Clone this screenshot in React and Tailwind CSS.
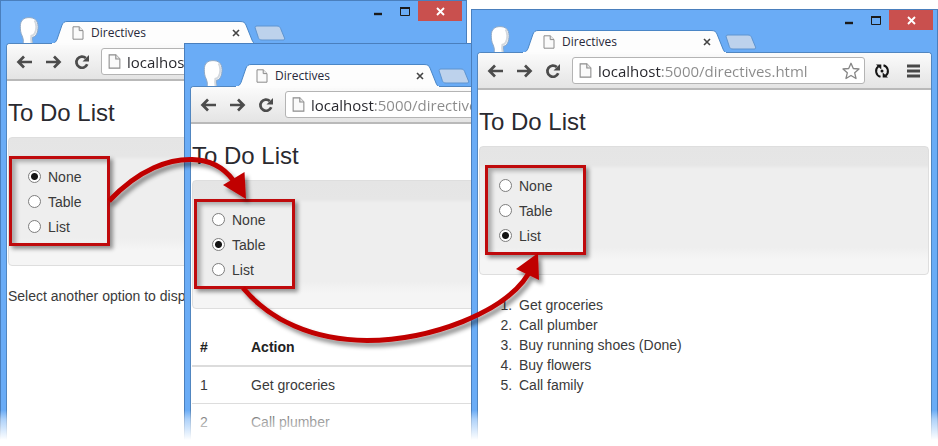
import React from "react";

function PageIcon({ className }) {
  return (
    <svg viewBox="0 0 12 14" className={className} aria-hidden="true">
      <path d="M1 .8h6.2L11 4.6v8.6H1z" fill="#fafafa" stroke="#8c8c8c" strokeWidth="1" />
      <path d="M7.2 .8v3.8H11" fill="#e8e8e8" stroke="#8c8c8c" strokeWidth="1" />
    </svg>
  );
}

function TitleBar() {
  return (
    <div className="relative h-[43px] shrink-0">
      <svg viewBox="0 0 22 28" className="absolute bottom-0 left-[17px] h-7 w-[22px]" aria-hidden="true">
        <path
          d="M5 28c.6-3 .4-5-.8-8C2.600 17 2.300 13.500 2.300 10.500 2.300 4.500 5.500 1.600 11 1.600s9 3 9 9c0 3-.4 5-1.300 7-.9 2.200-2.200 3.400-4.500 3.600-.4 2.500-.1 4.800.8 6.800z"
          fill="#ffffff"
          stroke="#8fa9c6"
          strokeWidth="1"
        />
        <path d="M16.500 4.500c2.300 3 2.300 9.500.2 13-.8 1.300-2 2-3.400 2.200-.4 2-.3 5 .2 7.500" fill="none" stroke="#d3d8de" strokeWidth="1.800" />
      </svg>
      <svg viewBox="0 0 460 24" className="absolute bottom-[-1px] left-0 h-6 w-[460px]" aria-hidden="true">
        <path
          d="M46 23.500c6 0 8-1 10-5L61 4c1.200-2.500 2.500-3.500 5-3.500h173c3.500 0 5 1 6 3.500l6 15c1.500 3.500 3 4.500 7 4.500z"
          fill="#fdfdfd"
          stroke="#4a86c6"
          strokeWidth="1"
        />
      </svg>
      <div className="absolute bottom-0 left-[71px] flex h-[22px] w-[170px] items-center">
        <PageIcon className="h-[14px] w-3" />
        <span className="ml-[7px] flex-1 font-['Open_Sans','Noto_Sans',sans-serif] text-[12px] leading-4 text-[#28283a]">Directives</span>
        <button type="button" aria-label="Close tab" className="h-3 w-3">
          <svg viewBox="0 0 12 12" className="h-3 w-3">
            <path d="M3 3l6 6M9 3l-6 6" stroke="#444" strokeWidth="1.600" />
          </svg>
        </button>
      </div>
      <button type="button" aria-label="New tab" className="absolute bottom-[3px] left-[253px] h-4 w-8">
        <svg viewBox="0 0 32 16" className="h-4 w-8">
          <path d="M3 1h20c2 0 3 1 3.600 2.500L30.500 13c.4 1.300 0 2-1.500 2H8c-2 0-3-.6-3.700-2.500L1.200 3C.8 1.800 1.500 1 3 1z" fill="#bdd2ec" stroke="#5e94d0" />
        </svg>
      </button>
      <div className="absolute right-1 top-0 flex h-5">
        <button type="button" aria-label="Minimize" className="w-[26px]">
          <svg viewBox="0 0 26 20" className="h-5 w-[26px]">
            <path d="M9 13h8" stroke="#1b1b1b" strokeWidth="2.400" />
          </svg>
        </button>
        <button type="button" aria-label="Maximize" className="w-[27px]">
          <svg viewBox="0 0 27 20" className="h-5 w-[27px]">
            <path d="M9.500 7h9v7.500h-9z" fill="none" stroke="#1b1b1b" />
            <path d="M9 7h10" stroke="#1b1b1b" strokeWidth="2" />
          </svg>
        </button>
        <button type="button" aria-label="Close" className="w-11 bg-[#c9504e]">
          <svg viewBox="0 0 44 20" className="h-5 w-11">
            <path d="M19 7l7 7M26 7l-7 7" stroke="#fff" strokeWidth="1.900" />
          </svg>
        </button>
      </div>
    </div>
  );
}

function Toolbar() {
  return (
    <div className="flex h-[37px] shrink-0 items-center rounded-t-[3px] border-b-2 border-[#b9b9b9] bg-linear-to-b from-[#fbfbfb] to-[#e4e4e4] pl-[9px] pr-[11px]">
      <button type="button" aria-label="Back" className="h-4 w-[18px]">
        <svg viewBox="0 0 18 16" className="h-4 w-[18px]">
          <path d="M16 8H3M8 2.500L2.500 8 8 13.500" fill="none" stroke="#4c4c4c" strokeWidth="2.700" />
        </svg>
      </button>
      <button type="button" aria-label="Forward" className="ml-[11px] h-4 w-[18px]">
        <svg viewBox="0 0 18 16" className="h-4 w-[18px]">
          <path d="M1 8h13M9 2.500L14.500 8 9 13.500" fill="none" stroke="#4c4c4c" strokeWidth="2.700" />
        </svg>
      </button>
      <button type="button" aria-label="Reload" className="ml-[10px] h-4 w-[18px]">
        <svg viewBox="0 0 18 16" className="h-4 w-[18px]">
          <path d="M14.200 10.300A5.600 5.600 0 1 1 12.800 4" fill="none" stroke="#4c4c4c" strokeWidth="2.700" />
          <path d="M16 1v6.500H9.500z" fill="#4c4c4c" />
        </svg>
      </button>
      <label className="ml-[10px] flex h-[27px] min-w-0 flex-1 items-center rounded-[3px] border border-[#b4b4b4] bg-white pl-[6px] pr-1">
        <PageIcon className="h-[15px] w-[13px] shrink-0" />
        <input
          type="text"
          aria-label="Address"
          defaultValue="localhost:5000/directives.html"
          className="ml-[6px] min-w-0 flex-1 bg-[linear-gradient(to_right,#26262c_63px,#8a8a8a_63px)] bg-clip-text font-['Open_Sans','Noto_Sans',sans-serif] text-[15px] leading-6 text-transparent outline-none"
        />
        <svg viewBox="0 0 18 18" className="h-[18px] w-[18px] shrink-0" aria-hidden="true">
          <path d="M9 1.300l2.300 5.200 5.700.5-4.300 3.800 1.300 5.700L9 13.500l-5 3 1.300-5.700L1 7l5.700-.5z" fill="#fff" stroke="#858585" strokeWidth="1.300" strokeLinejoin="round" />
        </svg>
      </label>
      <button type="button" aria-label="Sync extension" className="ml-[9px] h-4 w-4">
        <svg viewBox="0 0 16 16" className="h-4 w-4">
          <path d="M6.500 13.800A6 6 0 0 1 4.500 3.200M9.500 2.200a6 6 0 0 1 2 10.600" fill="none" stroke="#151515" strokeWidth="2" />
          <path d="M2 1.500h5.300v5zM14 14.500H8.700V9.500z" fill="#151515" />
          <circle cx="8" cy="8" r="1.500" fill="#151515" />
        </svg>
      </button>
      <button type="button" aria-label="Menu" className="ml-[17px] h-[14px] w-[13px]">
        <svg viewBox="0 0 13 14" className="h-[14px] w-[13px]">
          <path d="M0 2h13M0 7h13M0 12h13" stroke="#484848" strokeWidth="2.800" />
        </svg>
      </button>
    </div>
  );
}

const options = ["None", "Table", "List"];

function Picker({ name, selected }) {
  return (
    <fieldset className="flex h-[129px] flex-col rounded-[4px] border border-[#dedede] bg-[linear-gradient(#e5e5e5_0px,#e6e6e6_18px,#eeeeee_22px,#eeeeee_100px,#f5f5f5_112px,#f5f5f5_100%)] pl-[19px] pt-[26px]">
      {options.map((option) => (
        <label key={option} className="flex h-[25px] items-center gap-[7px]">
          <input
            type="radio"
            name={name}
            defaultChecked={option === selected}
            className="h-[13px] w-[13px] appearance-none rounded-full border border-[#7d7d7d] bg-white checked:bg-[radial-gradient(circle,#151515_3px,#ffffff_4px)]"
          />
          {option}
        </label>
      ))}
    </fieldset>
  );
}

function BrowserWindow({ className, name, selected, children }) {
  return (
    <section className={`absolute bottom-0 flex w-[467px] flex-col border border-b-0 border-[#4a7fbd] bg-[#6aacf6] ${className}`}>
      <TitleBar />
      <div className="relative -mt-px ml-[5px] mr-[5px] flex flex-1 flex-col rounded-t-[4px] border border-b-0 border-[#5186c0] bg-white">
        <Toolbar />
        <div className="flex flex-col pl-px pr-[2px] pt-[17px] text-[14px] leading-5 text-[#3a3a3a]">
          <h1 className="mb-[9px] text-[24px] leading-[30px] text-[#2a2a30]">To Do List</h1>
          <Picker name={name} selected={selected} />
          {children}
        </div>
      </div>
      <div className="absolute left-[51px] top-[42px] h-[2px] w-[203px] bg-[#fcfcfc]" />
    </section>
  );
}

const tasks = ["Get groceries", "Call plumber", "Buy running shoes (Done)", "Buy flowers", "Call family"];

function Highlight({ className }) {
  return (
    <div className={`pointer-events-none absolute h-[90px] w-[101px] border-[3px] border-[#bf0a0c] shadow-[3px_3px_4px_rgba(0,0,0,0.4),inset_4px_3px_4px_rgba(0,0,0,0.28)] ${className}`} />
  );
}

export default function App() {
  return (
    <main className="relative h-screen min-h-[446px] w-full overflow-hidden bg-white font-['Liberation_Sans',Arial,sans-serif]">
      <BrowserWindow className="left-0 top-0" name="view-none" selected="None">
        <p className="mt-[20px]">Select another option to display</p>
      </BrowserWindow>

      <BrowserWindow className="left-[184px] top-[43px]" name="view-table" selected="Table">
        <table className="mt-[20px] w-full text-left">
          <thead>
            <tr className="border-b-2 border-[#dcdcdc] text-[#222]">
              <th className="w-[51px] p-2">#</th>
              <th className="p-2">Action</th>
            </tr>
          </thead>
          <tbody>
            {tasks.slice(0, 2).map((task, index) => (
              <tr key={task} className="border-b border-[#dddddd]">
                <td className="p-2">{index + 1}</td>
                <td className="p-2">{task}</td>
              </tr>
            ))}
          </tbody>
        </table>
      </BrowserWindow>

      <BrowserWindow className="left-[471px] top-[9px]" name="view-list" selected="List">
        <ol className="mt-[20px] list-decimal pl-[37px]">
          {tasks.map((task) => (
            <li key={task} className="pl-[3px]">{task}</li>
          ))}
        </ol>
      </BrowserWindow>

      <Highlight className="left-[9px] top-[156px]" />
      <Highlight className="left-[194px] top-[199px]" />
      <Highlight className="left-[485px] top-[165px]" />

      <svg viewBox="0 0 938 446" className="pointer-events-none absolute left-0 top-0 h-[446px] w-[938px]" aria-hidden="true">
        <defs>
          <filter id="drop" x="-10%" y="-20%" width="120%" height="150%">
            <feDropShadow dx="3" dy="4" stdDeviation="2" floodColor="#000" floodOpacity="0.45" />
          </filter>
        </defs>
        <g filter="url(#drop)" fill="#c00000">
          <path d="M109 201C140 168 170 159 192 159.500C212 160 224 168 233 180" fill="none" stroke="#c00000" strokeWidth="5" />
          <path d="M246 199L223 185L244.500 172z" />
          <path d="M243 288C270 320 312 340 367 340.500C430 340 505 313 529 273" fill="none" stroke="#c00000" strokeWidth="5" />
          <path d="M538 253L516 269L539 280z" />
        </g>
      </svg>

      <div className="pointer-events-none absolute inset-x-0 bottom-0 h-[36px] bg-[linear-gradient(rgba(255,255,255,0)_0px,rgba(255,255,255,0.45)_9px,#ffffff_30px)]" />
    </main>
  );
}
